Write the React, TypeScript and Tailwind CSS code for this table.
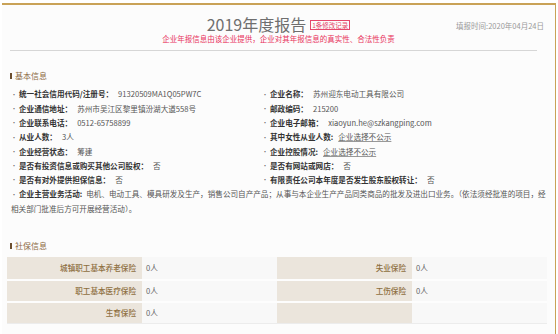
import React from 'react';

const basicRows = [
  ['统一社会信用代码/注册号：', '91320509MA1Q05PW7C', '企业名称：', '苏州迎东电动工具有限公司'],
  ['企业通信地址：', '苏州市吴江区黎里镇汾湖大道558号', '邮政编码：', '215200'],
  ['企业联系电话：', '0512-65758899', '企业电子邮箱：', 'xiaoyun.he@szkangping.com'],
  ['从业人数：', '3人', '其中女性从业人数:', '企业选择不公示'],
  ['企业经营状态：', '筹建', '企业控股情况:', '企业选择不公示'],
  ['是否有投资信息或购买其他公司股权：', '否', '是否有网站或网店：', '否'],
  ['是否有对外提供担保信息：', '否', '有限责任公司本年度是否发生股东股权转让：', '否'],
];

const socialRows = [
  ['城镇职工基本养老保险', '0人', '失业保险', '0人'],
  ['职工基本医疗保险', '0人', '工伤保险', '0人'],
  ['生育保险', '0人', '', ''],
];

const Item = ({ label, value }: { label: string; value: string }) => {
  const hidden = value === '企业选择不公示';
  return (
    <div className="flex items-center h-[14.3px] whitespace-nowrap">
      <span className="w-[8px] text-[6px] text-[#666]">·</span>
      <span className="font-bold text-[#333]">{label}</span>
      <span className={`ml-[5px] text-[#555] ${hidden ? 'underline decoration-[#999]' : ''}`}>{value}</span>
    </div>
  );
};

const SectionTitle = ({ title }: { title: string }) => (
  <div className="flex items-center h-[12px] gap-[3px]">
    <span className="w-[2px] h-[6px] bg-[#6b4e2e]"></span>
    <span className="text-[8px] text-[#8c6a45]">{title}</span>
  </div>
);

export default function App() {
  return (
    <div
      className="w-[558px] h-[334px] bg-white pt-[3px] pl-[2px] overflow-hidden"
      style={{ fontFamily: '"Noto Sans CJK SC", "Noto Sans", sans-serif' }}
    >
      <div className="w-[554px] h-[331px] bg-[#fcfcfc] border-t-2 border-r border-[#c9a257] relative">
        {/* Header */}
        <div className="pt-[9px]">
          <div className="flex items-center justify-center h-[20px] gap-[4px]">
            <span className="text-[16px] leading-[20px] text-[#6f6f6f]">2019年度报告</span>
            <span className="border border-[#e5476b] text-[#e5476b] text-[6.5px] leading-[8px] px-[1px] mt-[2px]">
              1条修改记录
            </span>
          </div>
          <div className="text-center text-[7.5px] leading-[10px] text-[#e8335c]">
            企业年报信息由该企业提供，企业对其年报信息的真实性、合法性负责
          </div>
          <div className="absolute right-[11px] top-[16px] text-[7.5px] leading-[10px] text-[#999]">
            填报时间:2020年04月24日
          </div>
          <div className="mt-[6px] ml-[8px] mr-[18px] border-t border-[#d6d6d6]"></div>
        </div>

        {/* Basic info */}
        <div className="mt-[19px] pl-[8px]">
          <SectionTitle title="基本信息" />
        </div>
        <div className="mt-[5px] pl-[9px] pr-[4px] text-[7.6px]">
          <div className="grid grid-cols-[251px_1fr]">
            {basicRows.map((r) => (
              <React.Fragment key={r[0]}>
                <Item label={r[0]} value={r[1]} />
                <Item label={r[2]} value={r[3]} />
              </React.Fragment>
            ))}
          </div>
          <p className="leading-[14.3px] text-[#555]">
            <span className="inline-block w-[8px] text-[6px] text-[#666]">·</span>
            <b className="text-[#333] mr-[4px]">企业主营业务活动:</b>
            电机、电动工具、模具研发及生产，销售公司自产产品；从事与本企业生产产品同类商品的批发及进出口业务。（依法须经批准的项目，经相关部门批准后方可开展经营活动）。
          </p>
        </div>

        {/* Social insurance */}
        <div className="mt-[23px] pl-[8px]">
          <SectionTitle title="社保信息" />
        </div>
        <div className="mt-[5px] ml-[5px] mr-[8px] text-[7.6px] border-b border-[#ececec]">
          {socialRows.map((r, i) => (
            <div key={i} className={`grid grid-cols-4 h-[22px] ${i > 0 ? 'border-t-2 border-[#fdfdfd]' : ''}`}>
              <div className="bg-[#ebe5dc] flex items-center justify-end pr-[6px] text-[#8e6f3f] font-medium">{r[0]}</div>
              <div className="bg-[#f8f8f8] flex items-center pl-[4px] text-[#666]">{r[1]}</div>
              <div className="bg-[#ebe5dc] flex items-center justify-end pr-[6px] text-[#8e6f3f] font-medium">{r[2]}</div>
              <div className="bg-[#f8f8f8] flex items-center pl-[4px] text-[#666]">{r[3]}</div>
            </div>
          ))}
        </div>
      </div>
    </div>
  );
}
